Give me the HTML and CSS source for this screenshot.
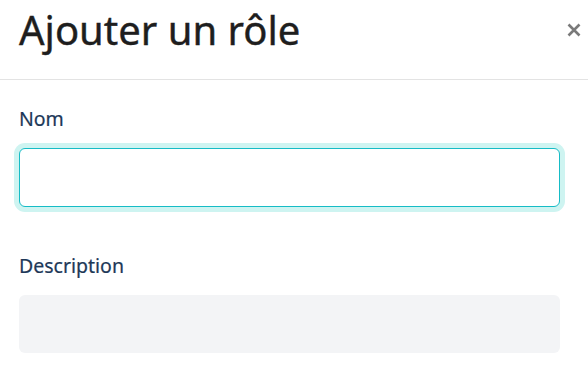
FILE: index.html
```html
<!DOCTYPE html>
<html lang="fr">
<head>
<meta charset="utf-8">
<link rel="stylesheet" href="styles.css">
</head>
<body>
<div class="modal">
  <header class="modal-header">
    <h1 class="modal-title">Ajouter un rôle</h1>
    <button class="close" aria-label="Fermer">
      <svg width="14" height="14" viewBox="0 0 14 14"><path d="M1.5 1.5 L12.5 12.5 M12.5 1.5 L1.5 12.5" stroke="#7a7a7a" stroke-width="2.6" stroke-linecap="butt"/></svg>
    </button>
  </header>
  <div class="modal-body">
    <label class="field-label" for="nom">Nom</label>
    <input class="field-input focused" id="nom" type="text">
    <label class="field-label desc" for="desc">Description</label>
    <div class="field-area" id="desc"></div>
  </div>
</div>
</body>
</html>
```

FILE: styles.css
```css
* { box-sizing: border-box; }
html, body { margin: 0; padding: 0; background: #fff; }
body { font-family: "Noto Sans", "Open Sans", "Liberation Sans", sans-serif; width: 588px; height: 383px; overflow: hidden; }
.modal { width: 588px; }
.modal-header {
  height: 80px;
  border-bottom: 1px solid #e3e3e3;
  display: flex;
  align-items: flex-start;
  justify-content: space-between;
  padding: 0 7px 0 19px;
}
.modal-title {
  margin: 6px 0 0 0;
  font-size: 40px;
  line-height: 48px;
  font-weight: 400;
  color: #1e1e1e;
  -webkit-text-stroke: 0.4px #1e1e1e;
}
.close {
  margin-top: 23px;
  border: 0;
  background: none;
  padding: 0;
  width: 14px;
  height: 14px;
  display: flex;
}
.modal-body {
  padding: 27px 28px 0 19px;
}
.field-label {
  display: block;
  font-size: 19.5px;
  line-height: 24px;
  color: #1d3858;
  font-weight: 400;
  -webkit-text-stroke: 0.2px #1d3858;
  margin-bottom: 17px;
}
.field-label.desc { margin-top: 47px; }
.field-input {
  display: block;
  width: 541px;
  height: 59px;
  border: 1px solid #16bcc6;
  border-radius: 6px;
  background: #fff;
  outline: none;
  margin: 0;
}
.field-input.focused { box-shadow: 0 0 0 5px #cef4f1; }
.field-area {
  width: 541px;
  height: 58px;
  background: #f3f4f6;
  border-radius: 6px;
}
```
